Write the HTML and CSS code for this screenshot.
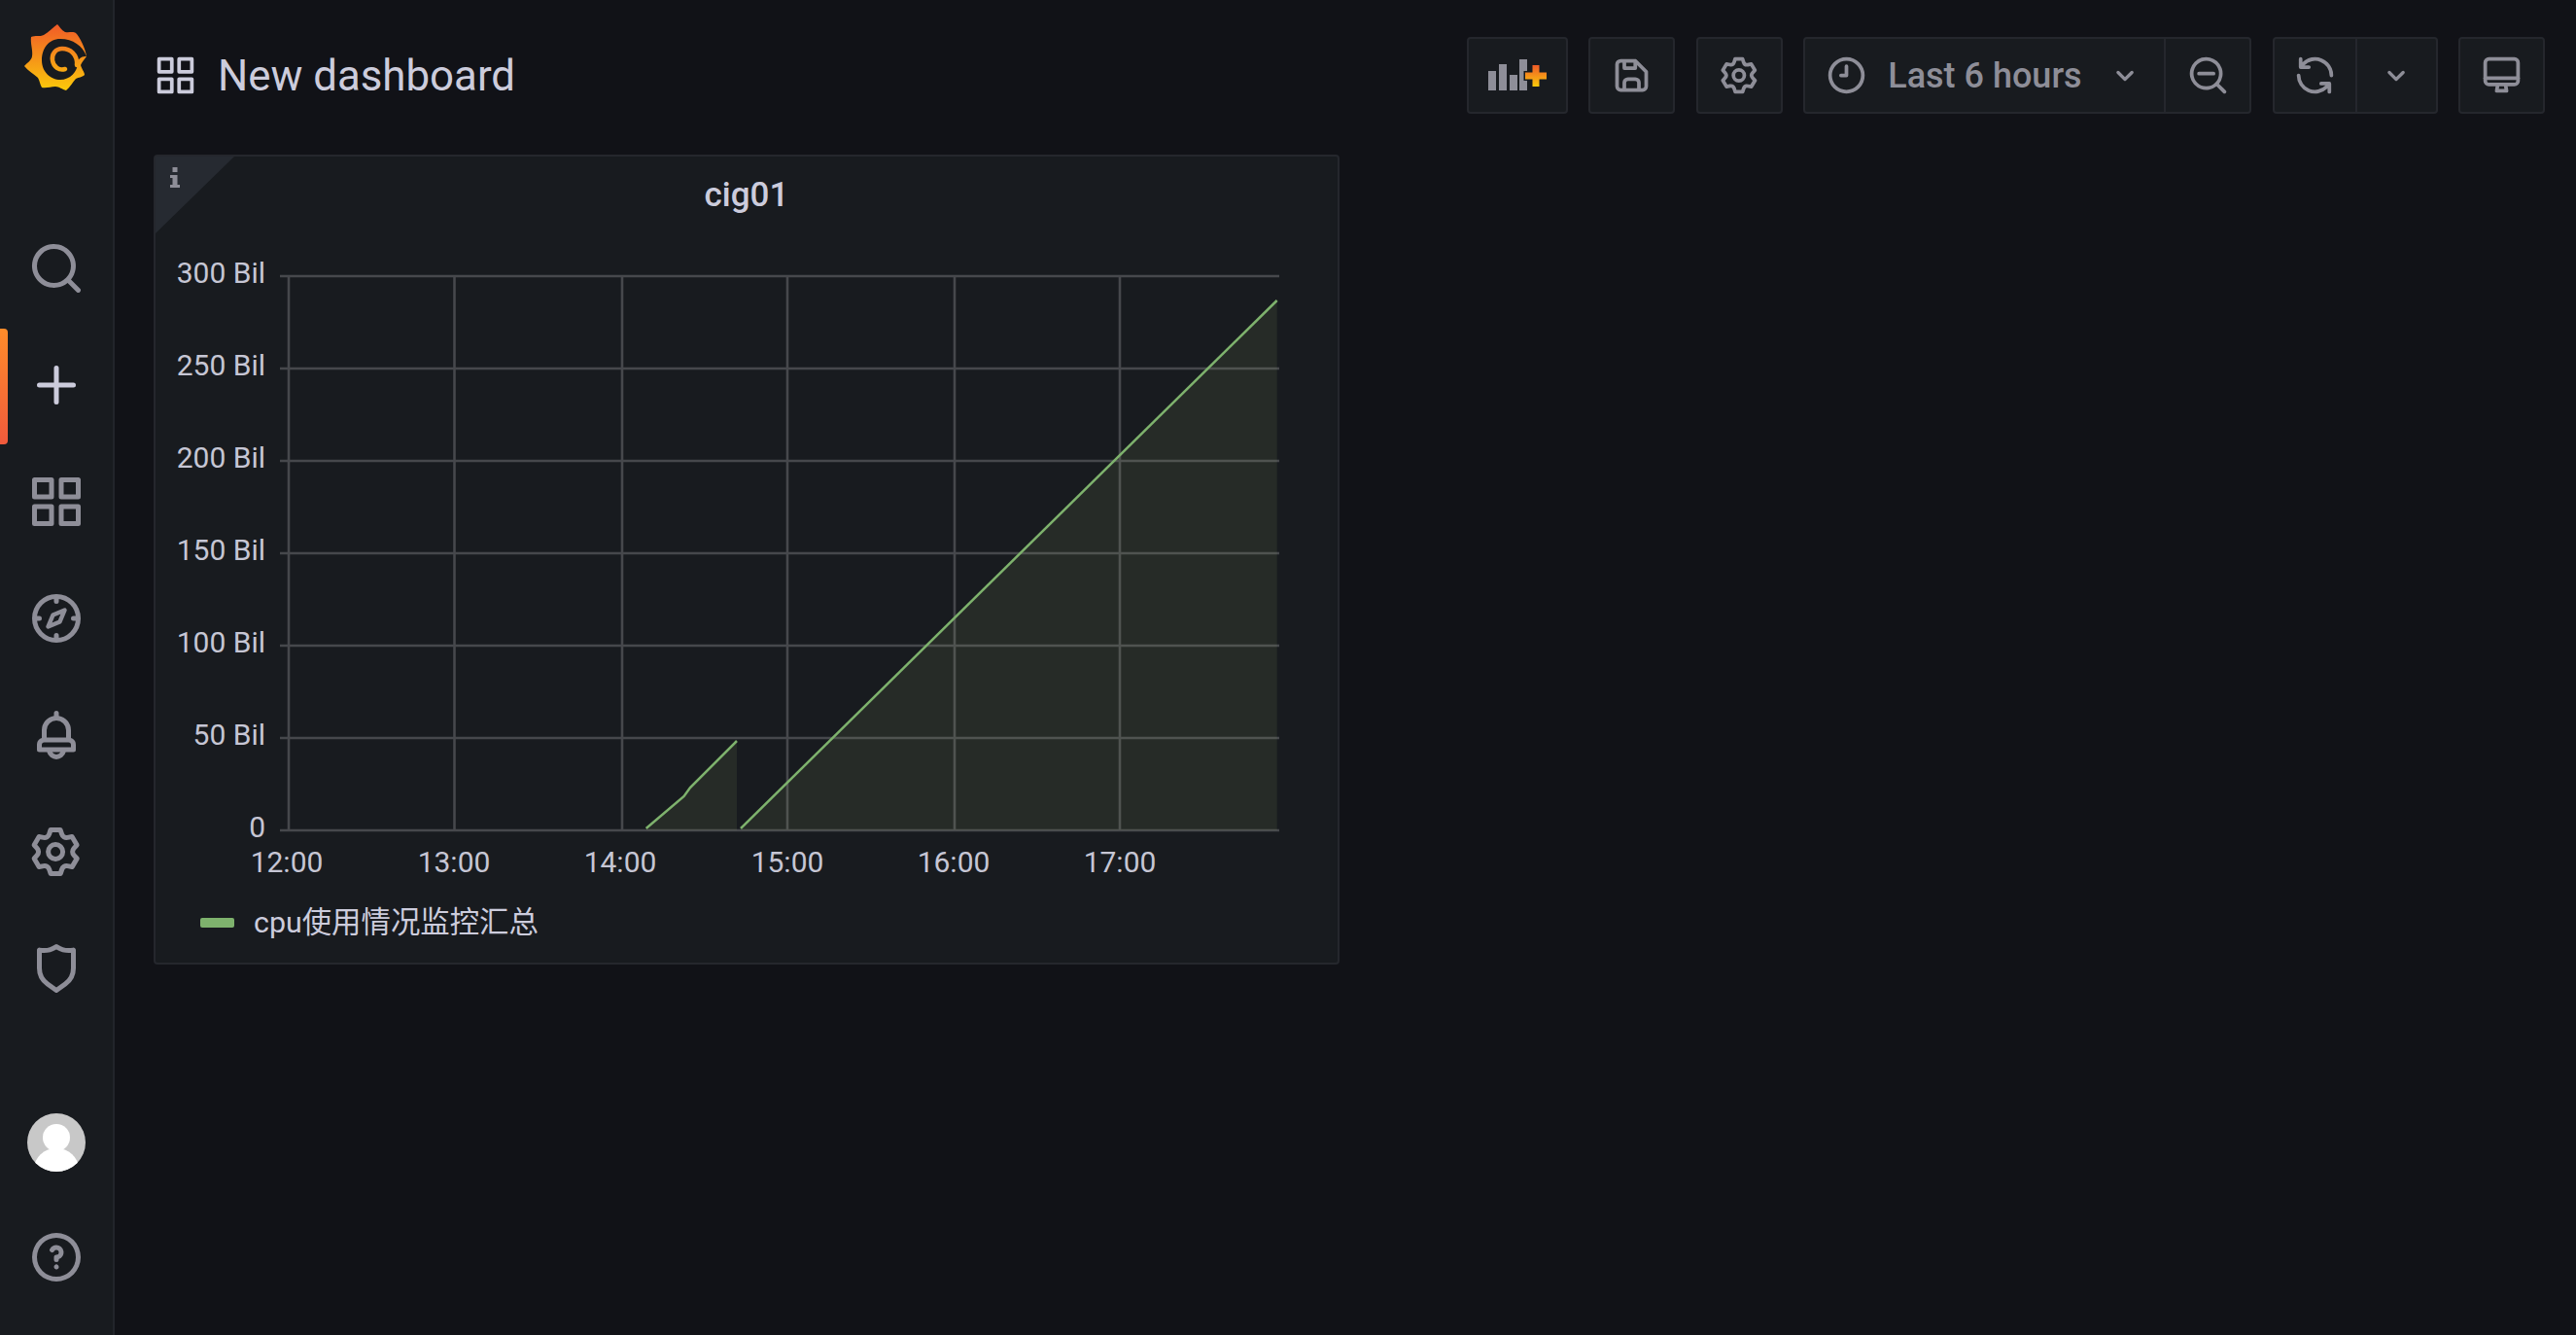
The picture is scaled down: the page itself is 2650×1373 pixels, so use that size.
FILE: index.html
```html
<!DOCTYPE html>
<html lang="en">

<head>
  <meta charset="UTF-8" />
  <title>New dashboard - Grafana</title>
  <link rel="stylesheet" href="styles.css">
</head>

<body>
  <aside class="sidemenu">
    <a class="side-logo">
      <svg width="116" height="120" viewBox="0 0 116 120">
        <defs>
          <linearGradient id="logoGrad" gradientUnits="userSpaceOnUse" x1="0" y1="25" x2="0" y2="93">
            <stop offset="0" stop-color="#f05a28" />
            <stop offset="1" stop-color="#fbca0a" />
          </linearGradient>
        </defs>
        <path fill="url(#logoGrad)" d="M59 25 C61 27 63 31 67 33 C71 34 75 32 78 34 C82 38 88 50 89 58 C86 62 84 64 83 67 C84 71 87 74 87 77 C84 80 81 79 78 81 C75 84 72 90 68 93 C64 92 61 89 57 89 C52 89 48 91 43 90 C41 87 41 83 39 80 C35 76 29 73 25 68 C28 64 32 63 33 58 C34 52 31 44 32 38 C36 36 41 38 45 36 C50 33 55 28 59 25 Z" />
        <path fill="#181b1f" d="M89 58 C85 47 75 40 62 40 C50 40 43 50 43 62 C43 74 52 82 62 82 C72 82 80 74 80 64 C81 59 85 58 89 58 Z" />
        <path fill="none" stroke="url(#logoGrad)" stroke-width="4.5" stroke-linecap="round" d="M79 67 C80 56 72 50 64 50 C57 50 53 56 54 62 C55 69 61 73 67 71" />
      </svg>
    </a>

    <a class="side-item">
      <svg class="icon-nav" viewBox="0 0 24 24"><path d="M21.71,20.29,18,16.61A9,9,0,1,0,16.61,18l3.68,3.68a1,1,0,0,0,1.42,0A1,1,0,0,0,21.71,20.29ZM11,18a7,7,0,1,1,7-7A7,7,0,0,1,11,18Z" /></svg>
    </a>
    <a class="side-item side-item-active">
      <svg class="icon-nav" viewBox="0 0 24 24"><path d="M19,11H13V5a1,1,0,0,0-2,0v6H5a1,1,0,0,0,0,2h6v6a1,1,0,0,0,2,0V13h6a1,1,0,0,0,0-2Z" /></svg>
    </a>
    <a class="side-item">
      <svg class="icon-nav" viewBox="0 0 24 24"><path d="M10,13H3a1,1,0,0,0-1,1v7a1,1,0,0,0,1,1h7a1,1,0,0,0,1-1V14A1,1,0,0,0,10,13ZM9,20H4V15H9ZM21,2H14a1,1,0,0,0-1,1v7a1,1,0,0,0,1,1h7a1,1,0,0,0,1-1V3A1,1,0,0,0,21,2ZM20,9H15V4h5Zm1,4H14a1,1,0,0,0-1,1v7a1,1,0,0,0,1,1h7a1,1,0,0,0,1-1V14A1,1,0,0,0,21,13Zm-1,7H15V15h5ZM10,2H3A1,1,0,0,0,2,3v7a1,1,0,0,0,1,1h7a1,1,0,0,0,1-1V3A1,1,0,0,0,10,2ZM9,9H4V4H9Z" /></svg>
    </a>
    <a class="side-item">
      <svg class="icon-nav icon-line" viewBox="0 0 24 24">
        <circle cx="12" cy="12" r="9" />
        <path d="M12 3.500V5M12 19V20.500M3.500 12H5M19 12H20.500" />
        <path stroke-linejoin="round" stroke-width="1.8" d="M15.400 8.600L13.400 13.400L8.600 15.400L10.600 10.600Z" />
      </svg>
    </a>
    <a class="side-item">
      <svg class="icon-nav" viewBox="0 0 24 24"><path d="M18,13.18V10a6,6,0,0,0-5-5.910V3a1,1,0,0,0-2,0V4.090A6,6,0,0,0,6,10v3.180A3,3,0,0,0,4,16v2a1,1,0,0,0,1,1H8.140a4,4,0,0,0,7.720,0H19a1,1,0,0,0,1-1V16A3,3,0,0,0,18,13.180ZM8,10a4,4,0,0,1,8,0v3H8Zm4,10a2,2,0,0,1-1.720-1h3.440A2,2,0,0,1,12,20Zm6-3H6V16a1,1,0,0,1,1-1H17a1,1,0,0,1,1,1Z" /></svg>
    </a>
    <a class="side-item">
      <svg class="icon-nav" viewBox="0 0 24 24"><path d="M19.900,12.660a1,1,0,0,1,0-1.320L21.180,9.900a1,1,0,0,0,.12-1.170l-2-3.460a1,1,0,0,0-1.070-.48l-1.880.38a1,1,0,0,1-1.150-.66l-.61-1.830A1,1,0,0,0,13.640,2h-4a1,1,0,0,0-1,.68L8.080,4.510a1,1,0,0,1-1.150.66L5,4.790A1,1,0,0,0,4,5.270L2,8.730A1,1,0,0,0,2.100,9.900l1.270,1.440a1,1,0,0,1,0,1.320L2.100,14.100A1,1,0,0,0,2,15.270l2,3.460a1,1,0,0,0,1.070.48l1.880-.38a1,1,0,0,1,1.150.66l.61,1.830a1,1,0,0,0,1,.68h4a1,1,0,0,0,.95-.68l.61-1.830a1,1,0,0,1,1.150-.66l1.880.38a1,1,0,0,0,1.070-.48l2-3.460a1,1,0,0,0-.12-1.170ZM18.410,14l.8.9-1.280,2.220-1.180-.24a3,3,0,0,0-3.450,2L12.920,20H10.360L10,18.860a3,3,0,0,0-3.450-2l-1.180.24L4.070,14.890l.8-.9a3,3,0,0,0,0-4l-.8-.9L5.350,6.890l1.180.24a3,3,0,0,0,3.450-2L10.360,4h2.560l.38,1.140a3,3,0,0,0,3.450,2l1.180-.24,1.280,2.220-.8.9A3,3,0,0,0,18.410,14ZM11.640,8a4,4,0,1,0,4,4A4,4,0,0,0,11.640,8Zm0,6a2,2,0,1,1,2-2A2,2,0,0,1,11.640,14Z" /></svg>
    </a>
    <a class="side-item">
      <svg class="icon-nav" viewBox="0 0 24 24"><path d="M19.630,3.650a1,1,0,0,0-.84-.2,8,8,0,0,1-6.220-1.270,1,1,0,0,0-1.140,0A8,8,0,0,1,5.210,3.450a1,1,0,0,0-.84.2A1,1,0,0,0,4,4.430v7.450a9,9,0,0,0,3.770,7.330l3.650,2.600a1,1,0,0,0,1.160,0l3.650-2.600A9,9,0,0,0,20,11.880V4.430A1,1,0,0,0,19.630,3.650ZM18,11.880a7,7,0,0,1-2.930,5.700L12,19.770,8.930,17.580A7,7,0,0,1,6,11.880V5.580a10,10,0,0,0,6-1.390,10,10,0,0,0,6,1.390Z" /></svg>
    </a>

    <div class="side-bottom">
      <a class="side-item side-item-avatar">
        <svg width="60" height="60" viewBox="0 0 60 60">
          <clipPath id="avatarClip"><circle cx="30" cy="30" r="30" /></clipPath>
          <circle cx="30" cy="30" r="30" fill="#c8c8c8" />
          <g clip-path="url(#avatarClip)" fill="#ffffff">
            <circle cx="30" cy="25" r="14" />
            <ellipse cx="30" cy="57" rx="23" ry="21" />
          </g>
        </svg>
      </a>
      <a class="side-item">
        <svg class="icon-nav" viewBox="0 0 24 24"><path d="M11.290,15.290a1.580,1.580,0,0,0-.12.15.76.76,0,0,0-.09.18.64.64,0,0,0-.06.18,1.360,1.360,0,0,0,0,.2.84.84,0,0,0,.08.38.9.9,0,0,0,.54.54.94.94,0,0,0,.76,0,.9.9,0,0,0,.54-.54A1,1,0,0,0,13,16a1,1,0,0,0-.29-.71A1,1,0,0,0,11.290,15.290ZM12,2A10,10,0,1,0,22,12,10,10,0,0,0,12,2Zm0,18a8,8,0,1,1,8-8A8,8,0,0,1,12,20ZM12,7A3,3,0,0,0,9.400,8.500a1,1,0,1,0,1.730,1A1,1,0,0,1,12,9a1,1,0,0,1,0,2,1,1,0,0,0-1,1v1a1,1,0,0,0,2,0v-.18A3,3,0,0,0,12,7Z" /></svg>
      </a>
    </div>
  </aside>

  <main class="dashboard">
    <header class="navbar">
      <div class="page-title">
        <svg class="icon-title" viewBox="0 0 24 24"><path d="M10,13H3a1,1,0,0,0-1,1v7a1,1,0,0,0,1,1h7a1,1,0,0,0,1-1V14A1,1,0,0,0,10,13ZM9,20H4V15H9ZM21,2H14a1,1,0,0,0-1,1v7a1,1,0,0,0,1,1h7a1,1,0,0,0,1-1V3A1,1,0,0,0,21,2ZM20,9H15V4h5Zm1,4H14a1,1,0,0,0-1,1v7a1,1,0,0,0,1,1h7a1,1,0,0,0,1-1V14A1,1,0,0,0,21,13Zm-1,7H15V15h5ZM10,2H3A1,1,0,0,0,2,3v7a1,1,0,0,0,1,1h7a1,1,0,0,0,1-1V3A1,1,0,0,0,10,2ZM9,9H4V4H9Z" /></svg>
        <span>New dashboard</span>
      </div>

      <div class="toolbar">
        <button class="tool-btn btn-add">
          <svg width="60" height="33" viewBox="0 0 60 33">
            <defs>
              <linearGradient id="plusGrad" x1="0" y1="0" x2="0" y2="1">
                <stop offset="0" stop-color="#f05a28" />
                <stop offset="1" stop-color="#fbca0a" />
              </linearGradient>
            </defs>
            <path fill="#8e8e98" d="M0 12h8v20H0zM11 5h8v27h-8zM22 16h8v16h-8zM32 0h8v32h-8z" />
            <path fill="url(#plusGrad)" stroke="#181b1f" stroke-width="3" paint-order="stroke" d="M45.500 6h7v7.500h7.500v7h-7.500V28h-7v-7.500H38v-7h7.500z" />
          </svg>
        </button>
        <button class="tool-btn">
          <svg class="icon-tool" viewBox="0 0 24 24"><path d="M20.710,9.290l-6-6a1,1,0,0,0-.32-.21A1.090,1.090,0,0,0,14,3H6A3,3,0,0,0,3,6V18a3,3,0,0,0,3,3H18a3,3,0,0,0,3-3V10A1,1,0,0,0,20.710,9.290ZM9,5h4V7H9Zm6,14H9V16a1,1,0,0,1,1-1h4a1,1,0,0,1,1,1Zm4-1a1,1,0,0,1-1,1H17V16a3,3,0,0,0-3-3H10a3,3,0,0,0-3,3v3H6a1,1,0,0,1-1-1V6A1,1,0,0,1,6,5H7V8A1,1,0,0,0,8,9h6a1,1,0,0,0,1-1V6.410l4,4Z" /></svg>
        </button>
        <button class="tool-btn">
          <svg class="icon-tool" viewBox="0 0 24 24"><path d="M19.900,12.660a1,1,0,0,1,0-1.320L21.180,9.900a1,1,0,0,0,.12-1.170l-2-3.460a1,1,0,0,0-1.070-.48l-1.880.38a1,1,0,0,1-1.150-.66l-.61-1.830A1,1,0,0,0,13.640,2h-4a1,1,0,0,0-1,.68L8.080,4.510a1,1,0,0,1-1.150.66L5,4.790A1,1,0,0,0,4,5.270L2,8.730A1,1,0,0,0,2.100,9.900l1.270,1.440a1,1,0,0,1,0,1.320L2.100,14.100A1,1,0,0,0,2,15.270l2,3.460a1,1,0,0,0,1.070.48l1.880-.38a1,1,0,0,1,1.150.66l.61,1.830a1,1,0,0,0,1,.68h4a1,1,0,0,0,.95-.68l.61-1.830a1,1,0,0,1,1.150-.66l1.880.38a1,1,0,0,0,1.070-.48l2-3.460a1,1,0,0,0-.12-1.170ZM18.410,14l.8.9-1.280,2.220-1.180-.24a3,3,0,0,0-3.450,2L12.920,20H10.360L10,18.860a3,3,0,0,0-3.450-2l-1.180.24L4.070,14.890l.8-.9a3,3,0,0,0,0-4l-.8-.9L5.350,6.890l1.180.24a3,3,0,0,0,3.450-2L10.360,4h2.560l.38,1.140a3,3,0,0,0,3.450,2l1.180-.24,1.280,2.220-.8.9A3,3,0,0,0,18.410,14ZM11.640,8a4,4,0,1,0,4,4A4,4,0,0,0,11.640,8Zm0,6a2,2,0,1,1,2-2A2,2,0,0,1,11.640,14Z" /></svg>
        </button>

        <div class="btn-group">
          <button class="tool-btn btn-time">
            <svg class="icon-tool" viewBox="0 0 24 24"><path d="M12,2A10,10,0,1,0,22,12,10,10,0,0,0,12,2Zm0,18a8,8,0,1,1,8-8A8,8,0,0,1,12,20Zm0-14a1,1,0,0,0-1,1v4H9a1,1,0,0,0,0,2h3a1,1,0,0,0,1-1V7A1,1,0,0,0,12,6Z" /></svg>
            <span class="time-label">Last 6 hours</span>
            <svg class="icon-chevron" viewBox="0 0 24 24"><path d="M17,9.170a1,1,0,0,0-1.410,0L12,12.710,8.460,9.170a1,1,0,0,0-1.410,0,1,1,0,0,0,0,1.420l4.240,4.240a1,1,0,0,0,1.420,0L17,10.590A1,1,0,0,0,17,9.170Z" /></svg>
          </button>
          <button class="tool-btn btn-zoom">
            <svg class="icon-tool" viewBox="0 0 24 24"><path d="M21.710,20.290,18,16.610A9,9,0,1,0,16.610,18l3.680,3.680a1,1,0,0,0,1.420,0A1,1,0,0,0,21.710,20.290ZM11,18a7,7,0,1,1,7-7A7,7,0,0,1,11,18Zm4-8H7a1,1,0,0,0,0,2h8a1,1,0,0,0,0-2Z" /></svg>
          </button>
        </div>

        <div class="btn-group">
          <button class="tool-btn btn-refresh">
            <svg class="icon-tool" viewBox="0 0 24 24"><path d="M19.910,15.510H15.380a1,1,0,0,0,0,2h2.400A8,8,0,0,1,4,12a1,1,0,0,0-2,0,10,10,0,0,0,16.880,7.230V21a1,1,0,0,0,2,0V16.500A1,1,0,0,0,19.910,15.510ZM12,2A10,10,0,0,0,5.120,4.770V3a1,1,0,0,0-2,0V7.500a1,1,0,0,0,1,1h4.500a1,1,0,0,0,0-2H6.220A8,8,0,0,1,20,12a1,1,0,0,0,2,0A10,10,0,0,0,12,2Z" /></svg>
          </button>
          <button class="tool-btn btn-interval">
            <svg class="icon-chevron" viewBox="0 0 24 24"><path d="M17,9.170a1,1,0,0,0-1.410,0L12,12.710,8.460,9.170a1,1,0,0,0-1.410,0,1,1,0,0,0,0,1.420l4.240,4.240a1,1,0,0,0,1.420,0L17,10.590A1,1,0,0,0,17,9.170Z" /></svg>
          </button>
        </div>

        <button class="tool-btn">
          <svg class="icon-tool icon-line" viewBox="0 0 24 24">
            <rect x="3" y="3" width="18" height="14" rx="2" />
            <path d="M3 13.500H21" />
            <path stroke-linejoin="round" d="M9.800 17.500L9.300 20.500H14.700L14.200 17.500" />
          </svg>
        </button>
      </div>
    </header>

    <section class="panel">
      <div class="panel-corner">
        <svg width="10" height="21" viewBox="0 0 10 21">
          <path d="M2.500 0h5v5h-5zM0 8h7.500v10H10v3H0v-3h2.500v-7H0z" />
        </svg>
      </div>
      <h2 class="panel-title">cig01</h2>

      <!-- viewBox uses page coordinates so the grid values read straight off the screenshot -->
      <svg class="chart" viewBox="160 240 1216 670">
        <g class="grid">
          <path d="M288 284H1316M288 379H1316M288 474H1316M288 569H1316M288 664H1316M288 759H1316M288 854H1316" />
          <path d="M297 284V854M467.500 284V854M640 284V854M810 284V854M982 284V854M1152 284V854" />
        </g>
        <path class="series-fill" d="M664.700 854L703.600 819L710 810L758 762V854Z" />
        <path class="series-fill" d="M762 854L1313.700 309V854Z" />
        <path class="series-line" d="M664.700 852L703.600 819L710 810L758 762" />
        <path class="series-line" d="M762 852L1313.700 309" />
        <g class="y-labels">
          <text x="273" y="291">300 Bil</text>
          <text x="273" y="386">250 Bil</text>
          <text x="273" y="481">200 Bil</text>
          <text x="273" y="576">150 Bil</text>
          <text x="273" y="671">100 Bil</text>
          <text x="273" y="766">50 Bil</text>
          <text x="273" y="861">0</text>
        </g>
        <g class="x-labels">
          <text x="295" y="897">12:00</text>
          <text x="467" y="897">13:00</text>
          <text x="638" y="897">14:00</text>
          <text x="810" y="897">15:00</text>
          <text x="981" y="897">16:00</text>
          <text x="1152" y="897">17:00</text>
        </g>
      </svg>

      <div class="legend">
        <span class="legend-swatch"></span>
        <span class="legend-text">cpu使用情况监控汇总</span>
      </div>
    </section>
  </main>
</body>

</html>
```

FILE: styles.css
```css
body {
  margin: 0;
  height: 100vh;
  display: flex;
  overflow: hidden;
  background-color: #111217;
  color: #ccccdc;
  font-family: Roboto, "Noto Sans CJK SC", sans-serif;
}

/* side menu */
.sidemenu {
  width: 116px;
  flex-shrink: 0;
  display: flex;
  flex-direction: column;
  background-color: #181b1f;
  border-right: 2px solid #22252b;
}

.side-logo {
  display: block;
  height: 120px;
  margin-bottom: 96px;
}

.side-logo svg {
  display: block;
}

.side-item {
  position: relative;
  height: 120px;
  display: flex;
  align-items: center;
  justify-content: center;
  fill: #8e8e98;
}

.side-item-active {
  fill: #ccccdc;
}

.side-item-active::before {
  content: "";
  position: absolute;
  left: 0;
  top: 2px;
  bottom: -1px;
  width: 8px;
  border-radius: 0 4px 4px 0;
  background: linear-gradient(180deg, #ff8c2a, #f05a3c);
}

.side-bottom {
  margin-top: auto;
  padding-bottom: 20px;
}

.side-item-avatar {
  height: 117px;
}

.icon-nav {
  width: 60px;
  height: 60px;
}

.icon-line {
  fill: none;
  stroke: #8e8e98;
  stroke-width: 2;
  stroke-linecap: round;
}

/* top bar */
.dashboard {
  flex: 1;
  min-width: 0;
  padding: 38px 32px 0 40px;
}

.navbar {
  display: flex;
  align-items: center;
  justify-content: space-between;
  height: 79px;
  margin-bottom: 42px;
}

.page-title {
  display: flex;
  align-items: center;
  gap: 21px;
  font-size: 43.8px;
  font-weight: 400;
}

.icon-title {
  width: 45px;
  height: 45px;
  fill: #ccccdc;
}

.toolbar {
  display: flex;
  gap: 21.4px;
}

.btn-group {
  display: flex;
}

.tool-btn {
  width: 89px;
  height: 79px;
  padding: 0;
  display: flex;
  align-items: center;
  justify-content: center;
  background-color: #181b1f;
  border: 2px solid #25272d;
  border-radius: 4px;
  color: #8e8e98;
  fill: #8e8e98;
  font-family: inherit;
}

.btn-add {
  width: 104px;
}

.btn-group .tool-btn:first-child {
  border-radius: 4px 0 0 4px;
}

.btn-group .tool-btn:last-child {
  border-radius: 0 4px 4px 0;
  border-left: none;
}

.btn-time {
  width: 373px;
  justify-content: flex-start;
  padding-left: 20px;
}

.btn-zoom {
  width: 88px;
}

.btn-refresh {
  width: 87px;
}

.btn-interval {
  width: 83px;
}

.icon-tool {
  width: 45px;
  height: 45px;
}

.icon-chevron {
  width: 40px;
  height: 40px;
}

.time-label {
  margin-left: 20px;
  margin-right: 24px;
  font-size: 36px;
  font-weight: 500;
}

/* panel */
.panel {
  position: relative;
  width: 1220px;
  height: 833px;
  box-sizing: border-box;
  display: flex;
  flex-direction: column;
  background-color: #181b1f;
  border: 2px solid #25272d;
  border-radius: 4px;
}

.panel-corner {
  position: absolute;
  left: 0;
  top: 0;
  width: 81px;
  height: 79px;
  background-color: #262a31;
  clip-path: polygon(0 0, 100% 0, 0 100%);
}

.panel-corner svg {
  display: block;
  margin: 11px 0 0 15px;
  fill: #8e8e98;
}

.panel-title {
  height: 79px;
  margin: 0;
  display: flex;
  align-items: center;
  justify-content: center;
  font-size: 35px;
  font-weight: 500;
}

.chart {
  display: block;
  width: 1216px;
  height: 670px;
  flex-shrink: 0;
}

.grid {
  fill: none;
  stroke: #46484c;
  stroke-width: 2.6;
}

.series-fill {
  fill: rgba(164, 187, 121, 0.1);
}

.series-line {
  fill: none;
  stroke: #7eb26d;
  stroke-width: 2.5;
}

.y-labels,
.x-labels {
  fill: #c6c6d4;
  font-size: 30px;
}

.y-labels {
  text-anchor: end;
}

.x-labels {
  text-anchor: middle;
}

.legend {
  height: 78px;
  display: flex;
  align-items: center;
  gap: 20px;
  padding-left: 46px;
  font-size: 30.4px;
}

.legend-swatch {
  width: 35px;
  height: 10px;
  border-radius: 2px;
  background-color: #7eb26d;
}

.legend-text {
  margin-bottom: 6px;
}
```
